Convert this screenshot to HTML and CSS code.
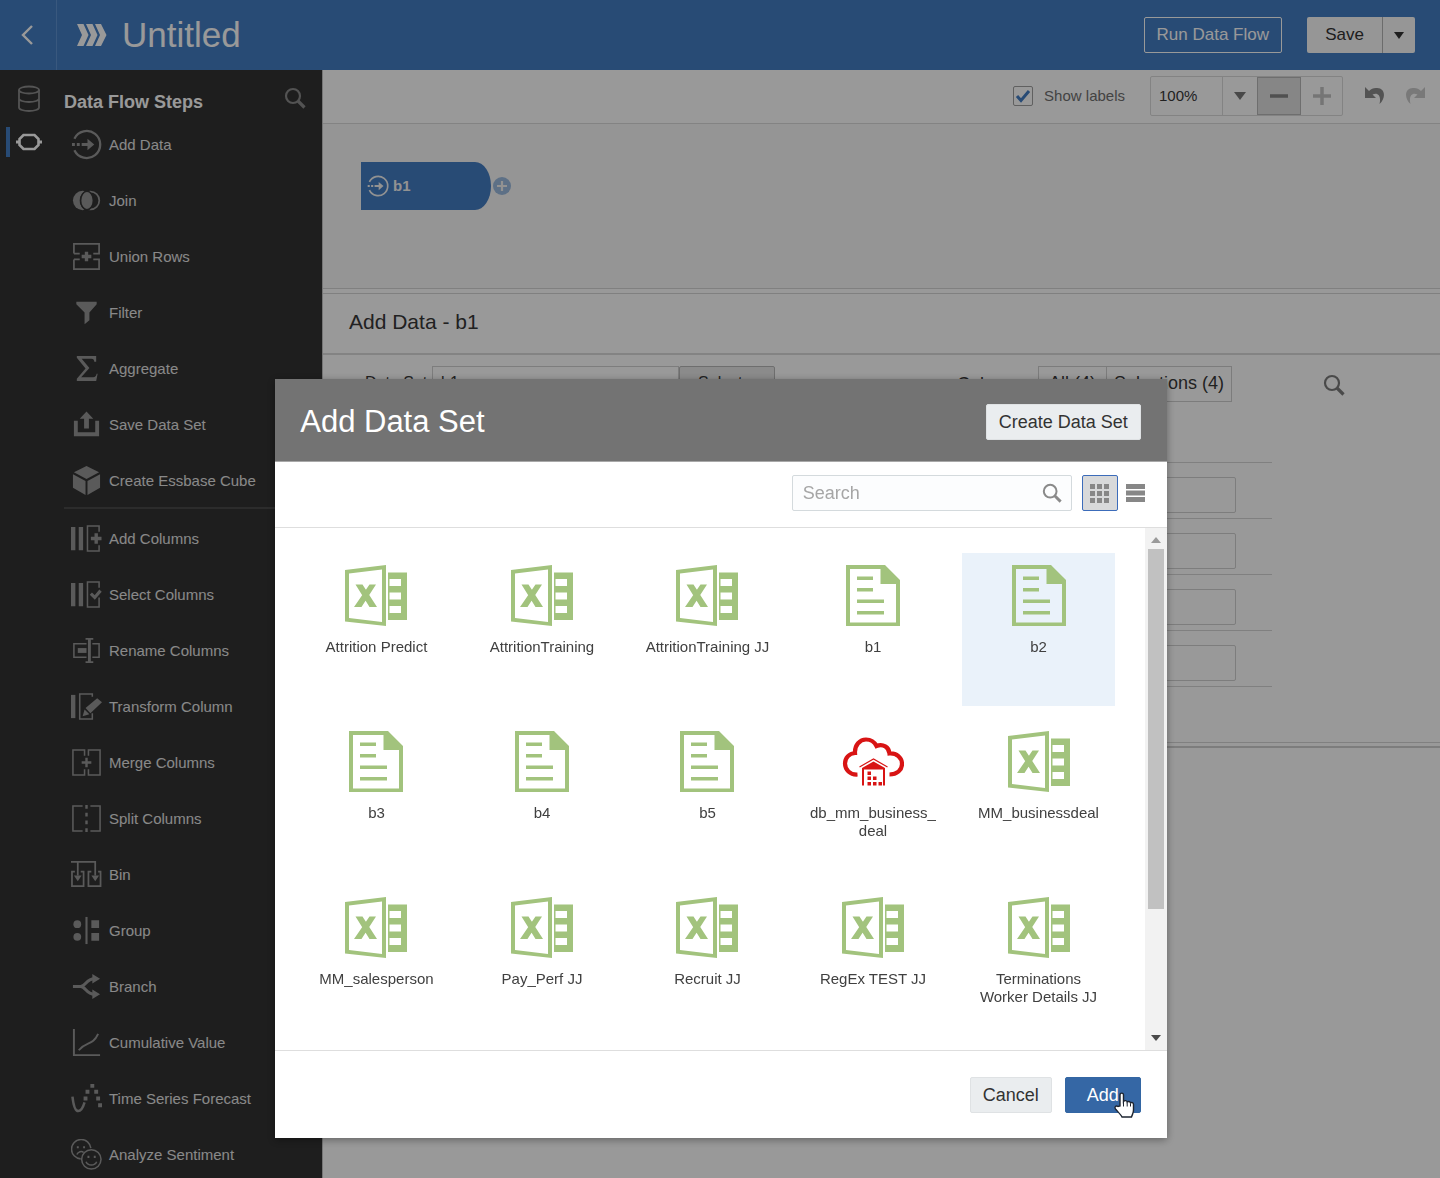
FILE: index.html
```html
<!DOCTYPE html>
<html lang="en">
<head>
<meta charset="utf-8">
<meta name="viewport" content="width=device-width, initial-scale=1">
<title>Untitled - Data Flow</title>
<link rel="stylesheet" href="styles.css">
</head>
<body>
<svg class="sprite" aria-hidden="true">
  <symbol id="search" viewBox="0 0 22 22"><circle cx="9" cy="9" r="7" fill="none" stroke="currentColor" stroke-width="2.2"/><path d="M14 14l6.500 6.500" stroke="currentColor" stroke-width="3.200"/></symbol>
  <symbol id="add-data" viewBox="0 0 32 32"><path d="M3.500 10A14 14 0 1 1 3.500 22" fill="none" stroke="currentColor" stroke-width="2.400"/><path d="M1 14.500h3v3H1zM6 14.500h3v3H6zM11 14.500h6V10l7 6-7 6v-4.500h-6z" fill="currentColor"/></symbol>
  <symbol id="excel" viewBox="0 0 62 62"><path fill-rule="evenodd" fill="currentColor" d="M0 5L41 0V61L0 56.500zM4 8.500V53L37 57V4.500zM43 7.500H62V55H43zM44.500 14v7H56v-7zM44.500 27.500v7H56v-7zM44.500 41v7H56v-7z"/><path fill="currentColor" d="M10.500 19.500h7L32 42h-7.500zM24.500 19.500H31L16.500 42H9z"/></symbol>
  <symbol id="doc" viewBox="0 0 62 62"><path fill-rule="evenodd" fill="currentColor" d="M4 0H43L58 15V61H4zM8 4V57.500H54V19H38.500V4z"/><path fill="currentColor" d="M15 11.500h16V15H15zM15 23h16v3.500H15zM15 34.500h27V38H15zM15 46h27v3.500H15z"/></symbol>
  <symbol id="cloud" viewBox="0 0 62 62"><path fill="none" stroke="currentColor" stroke-width="4.200" d="M15.500 43.500C8 44 3 38.500 3 32.500 3 27 7 22.500 13 22 12.500 14 18 8.500 24 8.500c5 0 8.500 2.500 10.500 6.500C41 12.500 47 16 47.500 22.500 54.500 22 60 26.500 60 33c0 6-5 10.500-12.500 10.500"/><path fill="none" stroke="currentColor" stroke-width="1.200" d="M17.500 36L31.500 28 45.500 36"/><path fill="currentColor" d="M20 37L31.500 30.500 43 37v17.500h-2V38.500H22v16h-2zM25.500 40.500H29v3.500h-3.500zM25.500 45.500H29V49h-3.500zM31 45.500h3.500V49H31zM25.500 51H29v3.500h-3.500zM31 51h3.500v3.500H31zM36.500 51H40v3.500h-3.500z"/></symbol>
</svg>

<header class="topbar">
  <button class="back" aria-label="Back"><svg width="16" height="22" viewBox="0 0 16 22"><path d="M13 2L4 11l9 9" fill="none" stroke="currentColor" stroke-width="2.400"/></svg></button>
  <svg class="flow-logo" width="30" height="22" viewBox="0 0 30 22"><path fill="currentColor" d="M0 0h6.500l5 11-5 11H0l5-11zM9 0h6.500l5 11-5 11H9l5-11zM18 0h6l5.500 11-5.500 11h-6l5-11z"/></svg>
  <h1 class="doc-title">Untitled</h1>
  <button class="run">Run Data Flow</button>
  <div class="save-group">
    <button class="save">Save</button>
    <button class="save-menu" aria-label="More save options"><svg width="10" height="7" viewBox="0 0 10 7"><path d="M0 0h10L5 7z" fill="currentColor"/></svg></button>
  </div>
</header>

<div class="workspace">
  <aside class="sidebar">
    <nav class="rail" aria-label="Panels">
      <button class="rail-btn" aria-label="Data"><svg width="24" height="28" viewBox="0 0 24 28" fill="none" stroke="currentColor" stroke-width="1.800"><ellipse cx="12" cy="5" rx="10" ry="3.500"/><path d="M2 5v17.500c0 2 4.500 3.500 10 3.500s10-1.500 10-3.500V5M2 13.500c0 2 4.500 3.500 10 3.500s10-1.500 10-3.500"/></svg></button>
      <button class="rail-btn rail-btn-on" aria-label="Data Flow Steps"><svg width="26" height="18" viewBox="0 0 26 18"><path d="M7.500 2h11l4 4v6l-4 4h-11l-4-4V6z" fill="none" stroke="currentColor" stroke-width="2.600"/><path d="M0 9h4M22 9h4" stroke="currentColor" stroke-width="3"/></svg></button>
    </nav>
    <section class="steps">
      <div class="steps-head">
        <h2 class="steps-title">Data Flow Steps</h2>
        <button class="icon-btn" aria-label="Search steps"><svg width="22" height="22"><use href="#search"/></svg></button>
      </div>
      <ul class="step-list step-list-ruled">
        <li class="step"><svg class="step-icon"><use href="#add-data"/></svg>Add Data</li>
        <li class="step"><svg class="step-icon" viewBox="0 0 32 32"><circle cx="12" cy="16" r="10" fill="currentColor"/><circle cx="20" cy="16" r="11" fill="#323232"/><circle cx="20" cy="16" r="9.200" fill="none" stroke="currentColor" stroke-width="1.800"/><ellipse cx="16.500" cy="16" rx="6.500" ry="9.500" fill="currentColor" stroke="#323232" stroke-width="1.400"/></svg>Join</li>
        <li class="step"><svg class="step-icon" viewBox="0 0 32 32"><path d="M3 13V3h26v10h-6M3 13h6M3 19v10h26V19h-6M3 19h6" fill="none" stroke="currentColor" stroke-width="1.800"/><path d="M16 11v10M11 16h10" stroke="currentColor" stroke-width="3.500"/></svg>Union Rows</li>
        <li class="step"><svg class="step-icon" viewBox="0 0 32 32"><path d="M5.500 5h21v2.500L19 16v8l-5 4V16L5.500 7.500z" fill="currentColor"/></svg>Filter</li>
        <li class="step"><svg class="step-icon" viewBox="0 0 32 32"><path d="M6 3h20v6h-2c0-2-1-3-3-3H11l8 9.500L10.500 25H23c2 0 3-1 3.500-3.500h1L26 29H6v-2.500L15 16 6 5z" fill="currentColor"/></svg>Aggregate</li>
        <li class="step"><svg class="step-icon" viewBox="0 0 32 32"><path d="M3 12h4v12h18V12h4v16H3zM13.500 20V10H9l7-7.500L23 10h-4.500v10z" fill="currentColor"/></svg>Save Data Set</li>
        <li class="step"><svg class="step-icon" viewBox="0 0 32 32"><path d="M16 1l13 6.500-13 7-13-7zM2 9.500l13 7V31L2 23.500zM30 9.500l-13 7V31l13-7.500z" fill="currentColor"/></svg>Create Essbase Cube</li>
      </ul>
      <ul class="step-list">
        <li class="step"><svg class="step-icon" viewBox="0 0 32 32"><path d="M0 4h4.500v24H0zM8 4h4.500v24H8z" fill="currentColor"/><path d="M29 9V3H17v26h12v-6" fill="none" stroke="currentColor" stroke-width="1.600"/><path d="M26 10.500v11M20.500 16h11" stroke="currentColor" stroke-width="3.500"/></svg>Add Columns</li>
        <li class="step"><svg class="step-icon" viewBox="0 0 32 32"><path d="M0 4h4.500v24H0zM8 4h4.500v24H8z" fill="currentColor"/><path d="M29 9V3H17v26h12V19" fill="none" stroke="currentColor" stroke-width="1.600"/><path d="M20.500 15l4 4 6-7" fill="none" stroke="currentColor" stroke-width="3.200"/></svg>Select Columns</li>
        <li class="step"><svg class="step-icon" viewBox="0 0 32 32"><path d="M16 9H3v14h13M22 9h7v14h-7M15 4h8M15 28h8" fill="none" stroke="currentColor" stroke-width="1.600"/><path d="M19 4v24" stroke="currentColor" stroke-width="3"/><path d="M7 13.500h9v5H7z" fill="currentColor"/></svg>Rename Columns</li>
        <li class="step"><svg class="step-icon" viewBox="0 0 32 32"><path d="M0 4h4.500v24H0z" fill="currentColor"/><path d="M22 6V3H9v26h13v-6" fill="none" stroke="currentColor" stroke-width="1.600"/><path d="M12 26l2-7 5 5zM15 17.500L27 7.500l5 4L20 23z" fill="currentColor"/></svg>Transform Column</li>
        <li class="step"><svg class="step-icon" viewBox="0 0 32 32"><path d="M14 9V3H2v26h12v-6M18 9V3h12v26H18v-6" fill="none" stroke="currentColor" stroke-width="1.600"/><path d="M16 11v10M11 16h10" stroke="currentColor" stroke-width="2.500"/></svg>Merge Columns</li>
        <li class="step"><svg class="step-icon" viewBox="0 0 32 32"><path d="M12 3H2v26h10M20 3h10v26H20" fill="none" stroke="currentColor" stroke-width="1.600"/><path d="M16 2v28" stroke="currentColor" stroke-width="2.500" stroke-dasharray="4 4"/></svg>Split Columns</li>
        <li class="step"><svg class="step-icon" viewBox="0 0 32 32"><path d="M0 3h25v14M7 3v14M4 13H1v15h12V13h-3M21 13h-3v15h12.500V13H28" fill="none" stroke="currentColor" stroke-width="1.800"/><path d="M3 17h8l-4 6zM21 17h8l-4 6z" fill="currentColor"/></svg>Bin</li>
        <li class="step"><svg class="step-icon" viewBox="0 0 32 32"><path d="M16 2v28" stroke="currentColor" stroke-width="2.200"/><g fill="currentColor"><circle cx="6.500" cy="9.500" r="4"/><circle cx="6.500" cy="22.500" r="4"/><path d="M21 5.500h8v8h-8zM21 18.500h8v8h-8z"/></g></svg>Group</li>
        <li class="step"><svg class="step-icon" viewBox="0 0 32 32"><path d="M2 16h8c5 0 6-8 14-8M10 16c5 0 6 8 14 8" fill="none" stroke="currentColor" stroke-width="3.200"/><path d="M22 3l8 5-8 5zM22 19l8 5-8 5z" fill="currentColor"/></svg>Branch</li>
        <li class="step"><svg class="step-icon" viewBox="0 0 32 32"><path d="M3 2v27h27M8 24c8-10 14-4 20-17" fill="none" stroke="currentColor" stroke-width="2"/></svg>Cumulative Value</li>
        <li class="step"><svg class="step-icon" viewBox="0 0 32 32"><path d="M1.500 14c1 9 3 15 6 15s5-4 6.500-9" fill="none" stroke="currentColor" stroke-width="2.600"/><path d="M13 14h4v4h-4zM15 7h4v4h-4zM20 1h4v4h-4zM24 7h4v4h-4zM26 14h4v4h-4zM28 21h4v4h-4z" fill="currentColor"/></svg>Time Series Forecast</li>
        <li class="step"><svg class="step-icon" viewBox="0 0 32 32" fill="none" stroke="currentColor" stroke-width="1.600"><path d="M10 20.500A10 10 0 1 1 20.500 9.500M6 16c1.500-3 5-4 7-2"/><circle cx="21" cy="21" r="10"/><path d="M15.500 23.500c2 4.500 9 4.500 11 0"/><path d="M6 8.500h2M12.500 8.500h2M17 18.500h2M23.500 18.500h2" stroke-width="2.200"/></svg>Analyze Sentiment</li>
      </ul>
    </section>
  </aside>

  <main class="main">
    <div class="toolbar">
      <label class="check"><input class="check-box" type="checkbox" checked>Show labels</label>
      <div class="zoom">
        <div class="zoom-pick">
          <select class="zoom-select" aria-label="Zoom level"><option>100%</option></select>
          <span class="zoom-arrow"><svg width="12" height="8" viewBox="0 0 12 8"><path d="M0 0h12L6 8z" fill="currentColor"/></svg></span>
        </div>
        <button class="zoom-btn zoom-out" aria-label="Zoom out"><svg width="18" height="18" viewBox="0 0 18 18"><path d="M0 9h18" stroke="currentColor" stroke-width="3.500"/></svg></button>
        <button class="zoom-btn zoom-in" aria-label="Zoom in"><svg width="18" height="18" viewBox="0 0 18 18"><path d="M0 9h18M9 0v18" stroke="currentColor" stroke-width="3.500"/></svg></button>
      </div>
      <div class="history">
        <button class="icon-btn" aria-label="Undo"><svg width="22" height="20" viewBox="0 0 22 20"><path d="M1 1v11h11L8.500 8.500C14 6 17.500 10 15.500 18 23 11 20.500 1 12 2 9 2.200 7 3 5 5z" fill="currentColor"/></svg></button>
        <button class="icon-btn icon-btn-off" aria-label="Redo"><svg width="22" height="20" viewBox="0 0 22 20"><path d="M21 1v11H10l3.500-3.500C8 6 4.500 10 6.500 18-1 11 1.500 1 10 2c3 .2 5 1 7 3z" fill="currentColor"/></svg></button>
      </div>
    </div>

    <div class="canvas">
      <button class="node"><svg width="22" height="22"><use href="#add-data"/></svg>b1</button>
      <button class="node-add" aria-label="Add step"><svg width="18" height="18" viewBox="0 0 18 18"><circle cx="9" cy="9" r="9" fill="#9bbbe0"/><path d="M9 4v10M4 9h10" stroke="#f4f4f4" stroke-width="2.200"/></svg></button>
    </div>

    <section class="details">
      <h2 class="details-title">Add Data - b1</h2>
      <div class="details-body">
        <div class="dataset">
          <label class="field-label" for="dataset">Data Set</label>
          <input class="dataset-input" id="dataset" value="b1">
          <button class="select-btn">Select...</button>
        </div>
        <div class="columns">
          <div class="columns-head">
            <span class="columns-label">Columns</span>
            <div class="toggle"><button class="toggle-btn">All (4)</button><button class="toggle-btn">Selections (4)</button></div>
          </div>
          <div class="column-rows">
            <div class="column-row"><input class="column-input" aria-label="Column 1 name"></div>
            <div class="column-row"><input class="column-input" aria-label="Column 2 name"></div>
            <div class="column-row"><input class="column-input" aria-label="Column 3 name"></div>
            <div class="column-row"><input class="column-input" aria-label="Column 4 name"></div>
          </div>
        </div>
        <button class="icon-btn columns-search" aria-label="Search columns"><svg width="22" height="22"><use href="#search"/></svg></button>
      </div>
    </section>
  </main>
</div>

<div class="backdrop">
  <div class="dialog" role="dialog" aria-labelledby="dialog-title">
    <div class="dialog-head">
      <h2 class="dialog-title" id="dialog-title">Add Data Set</h2>
      <button class="btn">Create Data Set</button>
    </div>
    <div class="dialog-tools">
      <div class="search">
        <input class="search-input" type="text" placeholder="Search" aria-label="Search data sets">
        <svg class="search-icon"><use href="#search"/></svg>
      </div>
      <div class="views">
        <button class="view-btn view-btn-on" aria-label="Grid view"><svg width="19" height="19" viewBox="0 0 19 19"><path d="M0 0h5v5H0zM7 0h5v5H7zM14 0h5v5h-5zM0 7h5v5H0zM7 7h5v5H7zM14 7h5v5h-5zM0 14h5v5H0zM7 14h5v5H7zM14 14h5v5h-5z" fill="currentColor"/></svg></button>
        <button class="view-btn" aria-label="List view"><svg width="19" height="18" viewBox="0 0 19 18"><path d="M0 0h19v5H0zM0 6.500h19v5H0zM0 13h19v5H0z" fill="currentColor"/></svg></button>
      </div>
    </div>
    <div class="dialog-body">
      <div class="tiles">
        <button class="tile"><svg class="tile-icon"><use href="#excel"/></svg>Attrition Predict</button>
        <button class="tile"><svg class="tile-icon"><use href="#excel"/></svg>AttritionTraining</button>
        <button class="tile"><svg class="tile-icon"><use href="#excel"/></svg>AttritionTraining JJ</button>
        <button class="tile"><svg class="tile-icon"><use href="#doc"/></svg>b1</button>
        <button class="tile tile-on"><svg class="tile-icon"><use href="#doc"/></svg>b2</button>
        <button class="tile"><svg class="tile-icon"><use href="#doc"/></svg>b3</button>
        <button class="tile"><svg class="tile-icon"><use href="#doc"/></svg>b4</button>
        <button class="tile"><svg class="tile-icon"><use href="#doc"/></svg>b5</button>
        <button class="tile"><svg class="tile-icon tile-icon-red"><use href="#cloud"/></svg><span>db_mm_business_<wbr>deal</span></button>
        <button class="tile"><svg class="tile-icon"><use href="#excel"/></svg>MM_businessdeal</button>
        <button class="tile"><svg class="tile-icon"><use href="#excel"/></svg>MM_salesperson</button>
        <button class="tile"><svg class="tile-icon"><use href="#excel"/></svg>Pay_Perf JJ</button>
        <button class="tile"><svg class="tile-icon"><use href="#excel"/></svg>Recruit JJ</button>
        <button class="tile"><svg class="tile-icon"><use href="#excel"/></svg>RegEx TEST JJ</button>
        <button class="tile"><svg class="tile-icon"><use href="#excel"/></svg>Terminations Worker Details JJ</button>
      </div>
      <div class="scrollbar">
        <svg class="scroll-arrow scroll-up" viewBox="0 0 10 6"><path d="M0 6h10L5 0z" fill="currentColor"/></svg>
        <div class="scroll-track"><div class="scroll-thumb"></div></div>
        <svg class="scroll-arrow" viewBox="0 0 10 6"><path d="M0 0h10L5 6z" fill="currentColor"/></svg>
      </div>
    </div>
    <div class="dialog-foot">
      <button class="btn">Cancel</button>
      <button class="btn btn-primary">Add<svg class="cursor" viewBox="0 0 22 26"><path d="M7 14V3c0-2.500 3.500-2.500 3.500 0v6.500c1-1.500 3.500-1 3.700.5 1-1 3-.6 3.300.8 1.200-.8 3 0 3 1.700V18c0 3-1 4-2 7H9c-1-2-3-4-6.500-8-1.500-2 .5-4 2.500-2.500z" fill="#fff" stroke="#1c2430" stroke-width="1.400"/><path d="M10.500 9.500v5M14.200 10.500v4M17.500 11.500v3" stroke="#1c2430" stroke-width="1"/></svg></button>
    </div>
  </div>
</div>
</body>
</html>
```
FILE: styles.css
```css
* { box-sizing: border-box; }
body {
  margin: 0;
  min-height: 100vh;
  display: flex;
  flex-direction: column;
  background: #fff;
  color: #383838;
  font: 15px/18px "Liberation Sans", Arial, sans-serif;
}
h1, h2, ul { margin: 0; padding: 0; font-weight: normal; }
ul { list-style: none; }
svg { display: block; flex: none; }
button, input, select { margin: 0; padding: 0; font: inherit; color: inherit; }
button { display: flex; align-items: center; justify-content: center; border: 0; background: none; }
.sprite { position: absolute; width: 0; height: 0; }
.icon-btn { width: 24px; height: 24px; color: #8a8a8a; }

/* Top bar */
.topbar {
  display: flex;
  align-items: center;
  height: 70px;
  padding-right: 25px;
  background: #447dc3;
  color: #fff;
}
.back { width: 57px; height: 70px; padding-right: 2px; border-right: 1px solid #5f93d2; }
.flow-logo { margin-left: 20px; }
.doc-title { flex: 1; margin-left: 15px; font-size: 35px; line-height: 40px; }
.run { height: 36px; padding: 0 12px; margin-right: 25px; border: 1px solid #fff; border-radius: 2px; font-size: 17px; }
.save-group { display: flex; height: 36px; border-radius: 2px; background: #fafafa; color: #333; font-size: 17px; }
.save { width: 76px; border-right: 1px solid #b4b4b4; }
.save-menu { width: 32px; }

/* Sidebar */
.workspace { flex: 1; display: flex; }
.sidebar { display: flex; flex: none; width: 322px; background: #323232; color: #e4e4e4; }
.rail { width: 64px; padding-top: 14px; }
.rail-btn { width: 52px; height: 30px; margin: 0 0 13px 6px; padding-right: 10px; border-left: 4px solid transparent; color: #8c8c8c; }
.rail-btn-on { border-color: #447dc3; color: #fff; }
.steps { flex: 1; }
.steps-head { display: flex; justify-content: space-between; align-items: center; height: 55px; padding: 0 15px 0 0; }
.steps-title { padding-top: 8px; color: #fff; font-size: 18px; line-height: 22px; font-weight: bold; }
.step-list { display: flex; flex-direction: column; gap: 16px; padding-top: 10px; }
.step-list-ruled { padding: 0 0 6px; border-bottom: 2px solid #4a4a4a; }
.step { display: flex; align-items: center; gap: 7px; height: 40px; padding-left: 7px; }
.step-icon { width: 31px; height: 31px; margin-bottom: 2px; color: #969696; }

/* Main area */
.main { flex: 1; min-width: 0; border-left: 1px solid #c4c4c4; }
.toolbar { display: flex; align-items: center; justify-content: flex-end; height: 54px; padding: 0 13px 2px 0; border-bottom: 1px solid #dadada; }
.check { display: flex; align-items: center; gap: 11px; margin-right: 25px; color: #707070; }
.check-box {
  appearance: none;
  width: 20px;
  height: 20px;
  border: 1px solid #a0a0a0;
  border-radius: 2px;
  background: no-repeat center/16px url("data:image/svg+xml,%3Csvg xmlns='http://www.w3.org/2000/svg' viewBox='0 0 16 16'%3E%3Cpath d='M2 8l4 4.500L14 3' fill='none' stroke='%23447dc3' stroke-width='3'/%3E%3C/svg%3E");
}
.zoom { display: flex; height: 40px; border: 1px solid #dadada; border-radius: 2px; }
.zoom-pick { position: relative; width: 106px; }
.zoom-select { appearance: none; width: 100%; height: 100%; padding-left: 8px; border: 0; background: none; }
.zoom-arrow { position: absolute; inset: 0 0 0 auto; display: flex; align-items: center; justify-content: center; width: 35px; border-left: 1px solid #dadada; color: #787878; pointer-events: none; }
.zoom-btn { width: 41px; color: #c4c4c4; }
.zoom-out { width: 44px; background: #e0e0e0; border: 1px solid #b8b8b8; color: #868686; }
.history { display: flex; gap: 16px; margin-left: 20px; }
.history .icon-btn-off { color: #cacaca; }
.canvas { display: flex; align-items: center; height: 165px; padding: 0 38px 41px; background: #f8f8f8; border-bottom: 1px solid #d6d6d6; }
.node { justify-content: flex-start; gap: 4px; width: 130px; height: 48px; padding-left: 6px; background: #447dc3; color: #f4f4f4; border-radius: 0 16px 16px 0 / 0 24px 24px 0; font-weight: bold; }
.node-add { width: 20px; height: 20px; margin-left: 1px; }
.details { margin-top: 4px; height: 455px; border-top: 1px solid #d6d6d6; border-bottom: 2px solid #d0d0d0; }
.details-title { height: 61px; padding: 16px 26px; border-bottom: 2px solid #dadada; font-size: 21px; line-height: 24px; }
.details-body { display: flex; align-items: flex-start; height: 388px; padding: 11px 94px 0 42px; border-bottom: 1px solid #d6d6d6; }
.dataset { display: flex; align-items: center; flex: 1; height: 36px; font-size: 16px; }
.field-label { width: 67px; padding-bottom: 2px; }
.dataset-input { width: 247px; height: 36px; padding: 0 8px 2px; border: 1px solid #d0d0d0; background: none; }
.select-btn { width: 96px; height: 36px; padding-bottom: 2px; border: 1px solid #b8b8b8; border-radius: 2px; background: #e8e8e8; }
.columns { width: 315px; margin-right: 50px; }
.columns-head { display: flex; align-items: center; justify-content: space-between; height: 36px; padding-right: 40px; font-size: 18px; }
.toggle { display: flex; border: 1px solid #cfcfcf; }
.toggle-btn { height: 34px; padding: 0 7px 2px; }
.toggle-btn:first-child { padding: 0 10px 2px; border-right: 1px solid #cfcfcf; }
.column-rows { margin-top: 60px; border-top: 1px solid #d6d6d6; }
.column-row { display: flex; justify-content: flex-end; align-items: flex-end; height: 56px; padding: 0 36px 5px 0; border-bottom: 1px solid #d6d6d6; }
.column-input { width: 180px; height: 36px; padding: 0 8px; border: 1px solid #d0d0d0; border-radius: 2px; background: none; }
.columns-search { margin-top: 7px; color: #7c7c7c; }

/* Dialog */
.backdrop {
  position: fixed;
  inset: 0;
  display: flex;
  flex-direction: column;
  align-items: center;
  justify-content: flex-end;
  padding: 0 0 40px 2px;
  background: rgba(0, 0, 0, 0.4);
}
.dialog { width: 62%; min-width: 760px; background: #fff; box-shadow: 0 2px 8px rgba(0, 0, 0, 0.35); }
.dialog-head { display: flex; align-items: center; justify-content: space-between; height: 83px; padding: 3px 26px 0 25px; border-bottom: 1px solid #a8a8a8; background: #737373; color: #fff; }
.dialog-title { font-size: 31px; line-height: 36px; }
.btn { position: relative; height: 36px; padding: 0 12px; border: 1px solid #dfe2e4; border-radius: 2px; background: #eaedef; color: #333; font-size: 18px; }
.dialog-tools { display: flex; align-items: center; justify-content: flex-end; gap: 10px; height: 66px; padding: 0 13px 3px; border-bottom: 1px solid #dedede; }
.search { display: flex; align-items: center; width: 280px; height: 36px; padding: 0 9px 0 10px; border: 1px solid #d4dadd; border-radius: 2px; background: #fcfdfe; }
.search-input { flex: 1; min-width: 0; border: 0; outline: 0; background: none; font-size: 18px; line-height: 24px; }
.search-input::placeholder { color: #a6a6a6; opacity: 1; }
.search-icon { width: 20px; height: 20px; color: #8a8a8a; }
.views { display: flex; }
.view-btn { width: 36px; height: 36px; border: 1px solid transparent; border-radius: 2px; color: #878787; }
.view-btn-on { border-color: #3c6cba; background: #d8d9da; }
.dialog-body { display: flex; height: 523px; border-bottom: 1px solid #dedede; }
.tiles { flex: 1; display: grid; grid-template-columns: repeat(5, 1fr); grid-auto-rows: 153px; gap: 13px; padding: 25px 30px 0 25px; overflow: hidden; }
.tile { flex-direction: column; justify-content: flex-start; gap: 11px; padding: 12px 10px 0; color: #404040; }
.tile-on { background: #eaf2fa; }
.tile-icon { width: 62px; height: 62px; color: #a2c37d; }
.tile-icon-red { color: #d81414; }
.scrollbar { display: flex; flex-direction: column; align-items: center; justify-content: space-between; width: 22px; padding: 9px 0; background: #f2f2f2; color: #4a4a4a; }
.scroll-arrow { width: 10px; height: 6px; }
.scroll-up { color: #9a9a9a; }
.scroll-track { flex: 1; width: 16px; margin: 6px 0; }
.scroll-thumb { height: 75%; background: #c1c1c1; }
.dialog-foot { display: flex; align-items: center; justify-content: flex-end; gap: 13px; height: 87px; padding: 0 26px 0 25px; }
.btn-primary { width: 76px; border-color: #3366a3; background: #3567a5; color: #fff; }
.cursor { position: absolute; right: 5px; bottom: -6px; width: 22px; height: 26px; }
```
